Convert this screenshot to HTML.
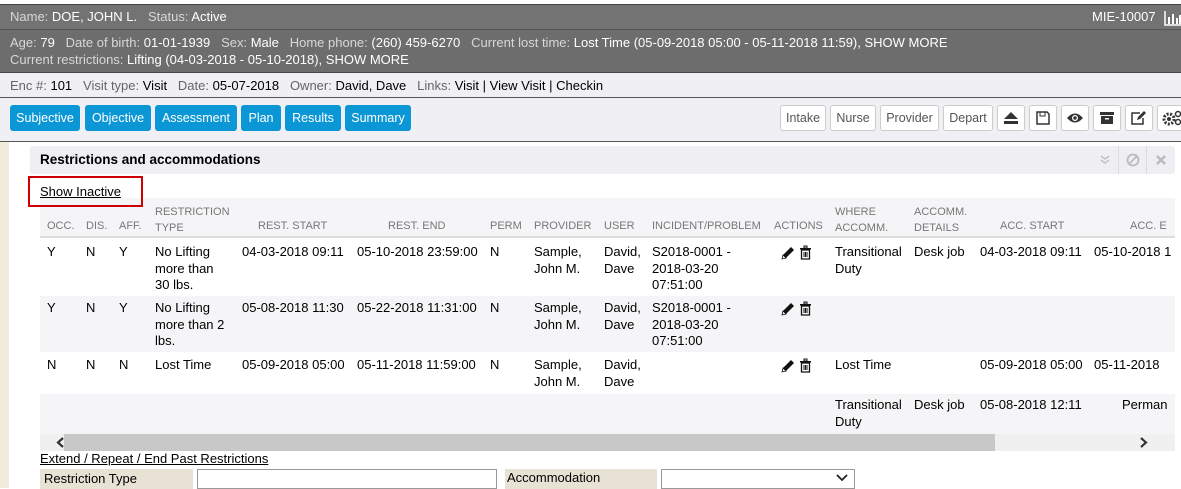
<!DOCTYPE html><html><head><style>
*{box-sizing:border-box;margin:0;padding:0}
body{width:1181px;height:488px;overflow:hidden;background:#fff;font-family:"Liberation Sans",Arial,sans-serif;font-size:13px;color:#000;position:relative}
.a{position:absolute;white-space:nowrap}
.bar1{position:absolute;left:0;top:4px;width:1181px;height:26px;background:#737373;border-top:1px solid #444;border-bottom:1px solid #555;color:#fff}
.bar2{position:absolute;left:0;top:30px;width:1181px;height:43px;background:#6d6d6d;border-bottom:1px solid #444;color:#fff}
.bar3{position:absolute;left:0;top:73px;width:1181px;height:25px;background:#efeff4;border-bottom:1px solid #555;color:#666}
.bar3 b,.bar1 b,.bar2 b{font-weight:normal}
.bar3 b{color:#000}.bar1 b,.bar2 b{color:#fff}
.bar1 span.g,.bar2 span.g{color:#d8d8d8}
.tb{position:absolute;left:0;top:98px;width:1181px;height:44px;background:#efeff4;border-bottom:1px solid #555}
.bb{position:absolute;top:7px;height:26px;background:#0b97d6;color:#fff;border-radius:3px;line-height:26px;text-align:center;font-size:12.5px}
.wb{position:absolute;top:7px;height:26px;background:#fff;border:1px solid #ccc;border-radius:3px;line-height:24px;text-align:center;color:#555;font-size:12.5px}
.h{color:#777;font-size:11px}
.ic{position:absolute;left:780px}
</style></head><body>
<div class="bar1"><div class="a" style="left:10px;top:4px"><span class="g">Name: </span><b>DOE, JOHN L.</b> &nbsp; <span class="g">Status: </span><b>Active</b></div>
<div class="a" style="left:1092px;top:4px">MIE-10007</div>
<svg class="a" style="left:1164px;top:5px" width="17" height="16"><path d="M1 1v14h16" stroke="#fff" fill="none" stroke-width="1.5"/><rect x="4" y="7" width="2" height="7" fill="#fff"/><rect x="8" y="4" width="2" height="10" fill="#fff"/><rect x="12" y="8" width="2" height="6" fill="#fff"/><rect x="15" y="5" width="2" height="9" fill="#fff"/></svg></div>
<div class="bar2"><div class="a" style="left:10px;top:5px"><span class="g">Age: </span><b>79</b> &nbsp; <span class="g">Date of birth: </span><b>01-01-1939</b> &nbsp; <span class="g">Sex: </span><b>Male</b> &nbsp; <span class="g">Home phone: </span><b>(260) 459-6270</b> &nbsp; <span class="g">Current lost time: </span><b>Lost Time (05-09-2018 05:00 - 05-11-2018 11:59), SHOW MORE</b></div>
<div class="a" style="left:10px;top:22px"><span class="g">Current restrictions: </span><b>Lifting (04-03-2018 - 05-10-2018), SHOW MORE</b></div></div>
<div class="bar3"><div class="a" style="left:10px;top:5px">Enc #: <b>101</b> &nbsp; Visit type: <b>Visit</b> &nbsp; Date: <b>05-07-2018</b> &nbsp; Owner: <b>David, Dave</b> &nbsp; Links: <b>Visit | View Visit | Checkin</b></div></div>
<div class="tb">
<div class="bb" style="left:10px;width:70px">Subjective</div>
<div class="bb" style="left:85px;width:66px">Objective</div>
<div class="bb" style="left:155px;width:82px">Assessment</div>
<div class="bb" style="left:241px;width:40px">Plan</div>
<div class="bb" style="left:285px;width:56px">Results</div>
<div class="bb" style="left:345px;width:66px">Summary</div>
<div class="wb" style="left:780px;width:46px">Intake</div>
<div class="wb" style="left:830px;width:46px">Nurse</div>
<div class="wb" style="left:880px;width:59px">Provider</div>
<div class="wb" style="left:943px;width:50px">Depart</div>
<div class="wb" style="left:997px;width:28px"><svg width="16" height="14" style="margin-top:5px"><path d="M8 1L15 8H1z" fill="#333"/><rect x="1" y="10" width="14" height="3" fill="#333"/></svg></div>
<div class="wb" style="left:1029px;width:28px"><svg width="14" height="14" style="margin-top:5px"><path d="M1 1h10l2 2v10H1z" stroke="#333" fill="none" stroke-width="1.5"/><rect x="4" y="1" width="5" height="4" stroke="#333" fill="none"/></svg></div>
<div class="wb" style="left:1061px;width:28px"><svg width="18" height="12" style="margin-top:6px"><path d="M1 6Q9 -3 17 6Q9 15 1 6z" fill="#333"/><circle cx="9" cy="6" r="3" fill="#fff"/><circle cx="9" cy="6" r="1.7" fill="#333"/></svg></div>
<div class="wb" style="left:1093px;width:28px"><svg width="14" height="14" style="margin-top:5px"><rect x="0" y="1" width="14" height="3" fill="#333"/><rect x="1" y="5" width="12" height="8" fill="#333"/><rect x="5" y="7" width="4" height="1.5" fill="#fff"/></svg></div>
<div class="wb" style="left:1125px;width:28px"><svg width="16" height="14" style="margin-top:5px"><path d="M9 2H1v11h11V7" stroke="#333" fill="none" stroke-width="1.5"/><path d="M6 9l1-3 6-6 2 2-6 6z" fill="#333"/></svg></div>
<div class="wb" style="left:1157px;width:30px;text-align:left;padding-left:4px"><svg width="22" height="16" style="margin-top:4px"><circle cx="7" cy="9" r="5" fill="none" stroke="#333" stroke-width="3" stroke-dasharray="2 1.5"/><circle cx="7" cy="9" r="2" fill="#333"/><circle cx="16" cy="4" r="2.5" fill="none" stroke="#333" stroke-width="1.5"/><circle cx="16" cy="12" r="2.5" fill="none" stroke="#333" stroke-width="1.5"/></svg></div>
</div>
<div class="a" style="left:0;top:142px;width:9px;height:346px;background:#f3ecdc"></div>
<div class="a" style="left:30px;top:146px;width:1145px;height:28px;background:#eeeef3;border-radius:3px"></div>
<div class="a" style="left:40px;top:152px;font-weight:bold;font-size:13.5px">Restrictions and accommodations</div>
<div class="a" style="left:1118px;top:146px;width:1px;height:28px;background:#ddd"></div>
<div class="a" style="left:1146px;top:146px;width:1px;height:28px;background:#ddd"></div>
<svg class="a" style="left:1100px;top:155px" width="10" height="10"><path d="M1 1l4 3 4-3M1 5l4 3 4-3" stroke="#bbb" fill="none" stroke-width="1.3"/></svg>
<svg class="a" style="left:1126px;top:153px" width="14" height="14"><circle cx="7" cy="7" r="5.5" stroke="#bbb" fill="none" stroke-width="1.8"/><path d="M3 11L11 3" stroke="#bbb" stroke-width="1.8"/></svg>
<svg class="a" style="left:1156px;top:155px" width="10" height="10"><path d="M1 1L9 9M9 1L1 9" stroke="#bbb" stroke-width="2.6"/></svg>
<div class="a" style="left:28px;top:176px;width:115px;height:31px;border:2px solid #c00;z-index:2"></div>
<div class="a" style="left:40px;top:184px;text-decoration:underline">Show Inactive</div>
<div class="a" style="left:40px;top:198px;width:1135px;height:40px;background:#f5f5f7;border-bottom:2px solid #ddd"></div>
<div class="a" style="left:40px;top:296px;width:1135px;height:56px;background:#f5f5f7"></div>
<div class="a" style="left:40px;top:394px;width:1135px;height:40px;background:#f5f5f7"></div>
<div class="a h" style="left:47px;top:220px">OCC.</div>
<div class="a h" style="left:86px;top:220px">DIS.</div>
<div class="a h" style="left:119px;top:220px">AFF.</div>
<div class="a h" style="left:155px;top:204px;line-height:16px">RESTRICTION<br>TYPE</div>
<div class="a h" style="left:258px;top:220px">REST. START</div>
<div class="a h" style="left:388px;top:220px">REST. END</div>
<div class="a h" style="left:490px;top:220px">PERM</div>
<div class="a h" style="left:534px;top:220px">PROVIDER</div>
<div class="a h" style="left:604px;top:220px">USER</div>
<div class="a h" style="left:652px;top:220px">INCIDENT/PROBLEM</div>
<div class="a h" style="left:774px;top:220px">ACTIONS</div>
<div class="a h" style="left:835px;top:204px;line-height:16px">WHERE<br>ACCOMM.</div>
<div class="a h" style="left:914px;top:204px;line-height:16px">ACCOMM.<br>DETAILS</div>
<div class="a h" style="left:1000px;top:220px">ACC. START</div>
<div class="a h" style="left:1130px;top:220px">ACC. E</div>
<svg width="0" height="0" style="position:absolute"><defs><g id="pt"><path d="M2 14l1-4 8-8 3 3-8 8z" fill="#111"/><path d="M2 14l1-4 3 3z" fill="#fff" stroke="#111" stroke-width=".8"/><rect x="20" y="3" width="11" height="1.5" fill="#111"/><rect x="24" y="1" width="3" height="2" fill="none" stroke="#111"/><path d="M21.5 5h8v9h-8z" fill="none" stroke="#111" stroke-width="1.3"/><path d="M24 7v5M25.5 7v5M27 7v5" stroke="#111"/></g></defs></svg>
<svg class="ic" style="top:245px" width="34" height="16"><use href="#pt"/></svg>
<svg class="ic" style="top:301px" width="34" height="16"><use href="#pt"/></svg>
<svg class="ic" style="top:358px" width="34" height="16"><use href="#pt"/></svg>
<div style="position:absolute;left:0;top:244px;line-height:16.5px">
<div class="a" style="left:47px">Y</div><div class="a" style="left:86px">N</div><div class="a" style="left:119px">Y</div>
<div class="a" style="left:155px">No Lifting<br>more than<br>30 lbs.</div>
<div class="a" style="left:242px">04-03-2018 09:11</div><div class="a" style="left:357px">05-10-2018 23:59:00</div>
<div class="a" style="left:490px">N</div><div class="a" style="left:534px">Sample,<br>John M.</div><div class="a" style="left:604px">David,<br>Dave</div>
<div class="a" style="left:652px">S2018-0001 -<br>2018-03-20<br>07:51:00</div>
<div class="a" style="left:835px">Transitional<br>Duty</div><div class="a" style="left:914px">Desk job</div>
<div class="a" style="left:980px">04-03-2018 09:11</div><div class="a" style="left:1094px">05-10-2018 1</div>
</div>
<div style="position:absolute;left:0;top:300px;line-height:16.5px">
<div class="a" style="left:47px">Y</div><div class="a" style="left:86px">N</div><div class="a" style="left:119px">Y</div>
<div class="a" style="left:155px">No Lifting<br>more than 2<br>lbs.</div>
<div class="a" style="left:242px">05-08-2018 11:30</div><div class="a" style="left:357px">05-22-2018 11:31:00</div>
<div class="a" style="left:490px">N</div><div class="a" style="left:534px">Sample,<br>John M.</div><div class="a" style="left:604px">David,<br>Dave</div>
<div class="a" style="left:652px">S2018-0001 -<br>2018-03-20<br>07:51:00</div>
</div>
<div style="position:absolute;left:0;top:357px;line-height:16.5px">
<div class="a" style="left:47px">N</div><div class="a" style="left:86px">N</div><div class="a" style="left:119px">N</div>
<div class="a" style="left:155px">Lost Time</div>
<div class="a" style="left:242px">05-09-2018 05:00</div><div class="a" style="left:357px">05-11-2018 11:59:00</div>
<div class="a" style="left:490px">N</div><div class="a" style="left:534px">Sample,<br>John M.</div><div class="a" style="left:604px">David,<br>Dave</div>
<div class="a" style="left:835px">Lost Time</div>
<div class="a" style="left:980px">05-09-2018 05:00</div><div class="a" style="left:1094px">05-11-2018</div>
</div>
<div style="position:absolute;left:0;top:397px;line-height:16.5px">
<div class="a" style="left:835px">Transitional<br>Duty</div><div class="a" style="left:914px">Desk job</div>
<div class="a" style="left:980px">05-08-2018 12:11</div><div class="a" style="left:1122px">Perman</div>
</div>
<div class="a" style="left:40px;top:434px;width:1135px;height:17px;background:#f0f0f0"></div>
<div class="a" style="left:64px;top:434px;width:931px;height:17px;background:#c8c8c8"></div>
<svg class="a" style="left:56px;top:437px" width="10" height="11"><path d="M7 1L2 5.5 7 10" stroke="#333" stroke-width="2.2" fill="none"/></svg>
<svg class="a" style="left:1138px;top:437px" width="10" height="11"><path d="M3 1l5 4.5L3 10" stroke="#333" stroke-width="2.2" fill="none"/></svg>
<div class="a" style="left:40px;top:451px;text-decoration:underline">Extend / Repeat / End Past Restrictions</div>
<div class="a" style="left:40px;top:469px;width:153px;height:20px;background:#e8e2d4;padding:2px 4px">Restriction Type</div>
<div class="a" style="left:197px;top:469px;width:300px;height:20px;border:1px solid #999"></div>
<div class="a" style="left:505px;top:469px;width:152px;height:20px;background:#e8e2d4;padding:1px 2px">Accommodation</div>
<div class="a" style="left:661px;top:469px;width:194px;height:20px;border:1px solid #999"></div>
<svg class="a" style="left:836px;top:474px" width="12" height="8"><path d="M1 1l5 5 5-5" stroke="#222" stroke-width="1.8" fill="none"/></svg>
</body></html>
